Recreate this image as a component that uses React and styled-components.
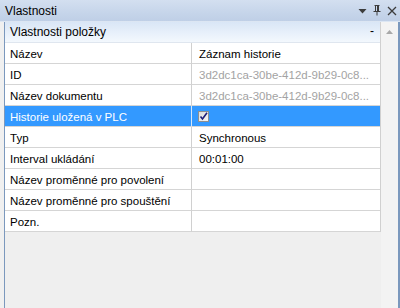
import React from "react";
import styled, { createGlobalStyle } from "styled-components";

const Global = createGlobalStyle`
  html, body { margin: 0; padding: 0; background: #f0f0f0; }
  body { font-family: "Liberation Sans", Arial, sans-serif; font-size: 11.5px; }
`;

const Window = styled.div`
  width: 400px;
  height: 308px;
  display: flex;
  flex-direction: column;
  overflow: hidden;
  background: #f0f0f0;
`;

const TitleBar = styled.div`
  height: 22px;
  box-sizing: border-box;
  display: flex;
  align-items: center;
  padding: 0 3px 0 5px;
  background: linear-gradient(to bottom, #d3dff0 0%, #c6d5ea 60%, #bfcfe6 100%);
  border-bottom: 1px solid #dce6f3;
  color: #000;
`;

const Title = styled.div`
  flex: 1;
  font-size: 12px;
`;

const TitleButtons = styled.div`
  display: flex;
  align-items: center;
  gap: 6px;
`;

const Body = styled.div`
  flex: 1;
  display: flex;
  min-height: 0;
`;

const LeftGutter = styled.div`
  width: 4px;
  background: #f0f0f0;
  border-right: 1px solid #7b98bd;
`;

const Content = styled.div`
  flex: 1;
  background: #efefef;
  display: flex;
  flex-direction: column;
`;

const Grid = styled.div`
  display: grid;
  grid-template-columns: 187px 1fr;
  border-right: 1px solid #d0d0d0;
  background: #fff;
`;

const GroupHeader = styled.div`
  grid-column: 1 / -1;
  height: 21px;
  box-sizing: border-box;
  display: flex;
  align-items: center;
  justify-content: space-between;
  padding: 0 6px 0 5px;
  font-size: 12px;
  background: linear-gradient(to bottom, #d9e6f6 0%, #e9f1fb 60%, #f3f8fd 100%);
  border-bottom: 1px solid #dfe6ef;
`;

const Collapse = styled.span`
  line-height: 1;
  margin-top: -3px;
`;

const Cell = styled.div`
  height: 21px;
  box-sizing: border-box;
  display: flex;
  align-items: center;
  padding-top: 1px;
  white-space: nowrap;
  overflow: hidden;
  border-bottom: 1px solid #d5d5d5;
  background: ${(p) => (p.$selected ? "#3399ff" : "#fff")};
  color: ${(p) => (p.$selected ? "#fff" : p.$muted ? "#a3a3a3" : "#000")};
`;

const LabelCell = styled(Cell)`
  padding-left: 5px;
  border-right: 1px solid ${(p) => (p.$selected ? "#d6e6f7" : "#d0d0d0")};
`;

const ValueCell = styled(Cell)`
  padding-left: 7px;
`;

const Check = styled.span`
  width: 11px;
  height: 11px;
  box-sizing: border-box;
  border: 1px solid #8e8f8f;
  background: linear-gradient(135deg, #dcdcdc, #f6f6f6);
  display: flex;
  align-items: center;
  justify-content: center;
  margin-left: -1px;
`;

const Scrollbar = styled.div`
  width: 17px;
  background: #f3f3f3;
  display: flex;
  justify-content: center;
  padding-top: 8px;
  box-sizing: border-box;
`;

const RightBorder = styled.div`
  width: 2px;
  background: #7b98bd;
`;

const rows = [
  { label: "Název", value: "Záznam historie" },
  { label: "ID", value: "3d2dc1ca-30be-412d-9b29-0c8...", muted: true },
  { label: "Název dokumentu", value: "3d2dc1ca-30be-412d-9b29-0c8...", muted: true },
  { label: "Historie uložená v PLC", check: true, selected: true },
  { label: "Typ", value: "Synchronous" },
  { label: "Interval ukládání", value: "00:01:00" },
  { label: "Název proměnné pro povolení", value: "" },
  { label: "Název proměnné pro spouštění", value: "" },
  { label: "Pozn.", value: "" },
];

export default function App() {
  return (
    <>
      <Global />
      <Window>
        <TitleBar>
          <Title>Vlastnosti</Title>
          <TitleButtons>
            <svg width="9" height="6" viewBox="0 0 9 6">
              <path d="M0.5 1h8L4.5 5.5z" fill="#3c3c3c" />
            </svg>
            <svg width="8" height="11" viewBox="0 0 8 11">
              <path d="M1.5 0.5h5M2.5 0.5v6M5.5 0.5v6M0.5 6.5h7M4 6.5v4" stroke="#3c3c3c" strokeWidth="1" fill="none" />
              <path d="M4.5 1v5.5" stroke="#3c3c3c" strokeWidth="1" />
            </svg>
            <svg width="10" height="10" viewBox="0 0 10 10">
              <path d="M1 1l8 8M9 1l-8 8" stroke="#3c3c3c" strokeWidth="1.3" />
            </svg>
          </TitleButtons>
        </TitleBar>
        <Body>
          <LeftGutter />
          <Content>
            <Grid>
              <GroupHeader>
                <span>Vlastnosti položky</span>
                <Collapse>-</Collapse>
              </GroupHeader>
              {rows.map((r) => (
                <React.Fragment key={r.label}>
                  <LabelCell $selected={r.selected}>{r.label}</LabelCell>
                  <ValueCell $selected={r.selected} $muted={r.muted}>
                    {r.check ? (
                      <Check>
                        <svg width="9" height="9" viewBox="0 0 9 9">
                          <path d="M1.5 4.5l2 2.5L8 0.8" stroke="#1e1e78" strokeWidth="1.6" fill="none" />
                        </svg>
                      </Check>
                    ) : (
                      r.value
                    )}
                  </ValueCell>
                </React.Fragment>
              ))}
            </Grid>
          </Content>
          <Scrollbar>
            <svg width="7" height="4" viewBox="0 0 7 4">
              <path d="M0 4L3.5 0L7 4z" fill="#a8a8a8" />
            </svg>
          </Scrollbar>
          <RightBorder />
        </Body>
      </Window>
    </>
  );
}
